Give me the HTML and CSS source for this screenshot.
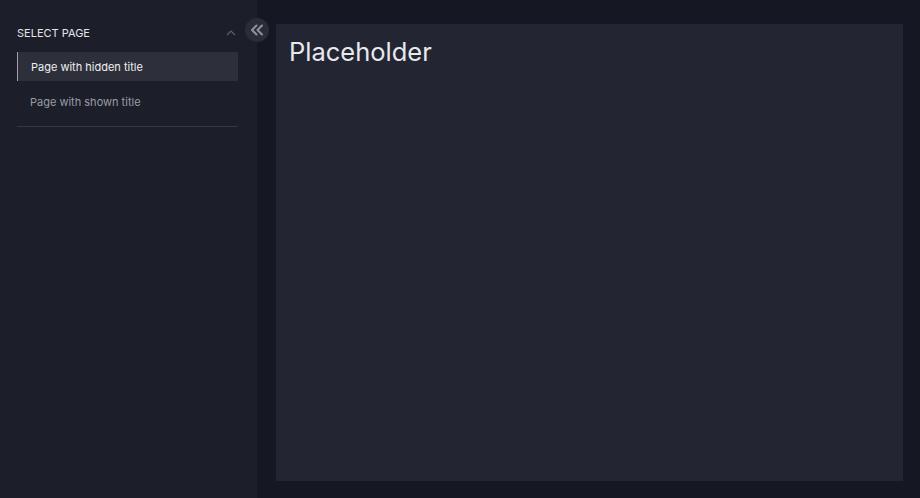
FILE: index.html
```html
<!DOCTYPE html>
<html>
<head>
<meta charset="utf-8">
<link rel="stylesheet" href="styles.css">
</head>
<body>
<div class="app">
  <aside class="sidebar">
    <div class="section-head">
      <span class="section-title">SELECT PAGE</span>
      <svg class="chev-up" width="10" height="6" viewBox="0 0 10 6"><path d="M1 5 L5 1 L9 5" fill="none" stroke="#5d606c" stroke-width="1.2"/></svg>
    </div>
    <nav class="nav">
      <div class="nav-item active">Page with hidden title</div>
      <div class="nav-item">Page with shown title</div>
    </nav>
    <div class="divider"></div>
    <button class="collapse" aria-label="Collapse">
      <svg width="14" height="12" viewBox="0 0 14 12"><path d="M6.5 1.5 L2 6 L6.5 10.5 M12 1.5 L7.5 6 L12 10.5" fill="none" stroke="#8f919c" stroke-width="2" stroke-linecap="round" stroke-linejoin="round"/></svg>
    </button>
  </aside>
  <main class="main">
    <section class="card">
      <h1 class="title">Placeholder</h1>
    </section>
  </main>
</div>
</body>
</html>
```
FILE: styles.css
```css
* { box-sizing: border-box; }
html, body { margin: 0; padding: 0; height: 100%; }
body {
  font-family: Inter, "Noto Sans", "Liberation Sans", sans-serif;
  background: #151722;
  color: #e6e7ea;
}
.app {
  display: flex;
  height: 100vh;
}
.sidebar {
  position: relative;
  width: 257px;
  flex-shrink: 0;
  background: #1c1e2a;
  padding: 24px 19px 0 17px;
}
.section-head {
  display: flex;
  align-items: center;
  justify-content: space-between;
  height: 18px;
  padding-right: 2px;
}
.section-title {
  font-size: 11px;
  color: #e4e5e9;
}
.chev-up { display: block; }
.nav {
  margin-top: 10px;
  display: flex;
  flex-direction: column;
  gap: 6px;
}
.nav-item {
  height: 29px;
  display: flex;
  align-items: center;
  padding-left: 13px;
  font-size: 11px;
  color: #9a9ca6;
}
.nav-item.active {
  background: #2d2f3b;
  color: #eeeff2;
  border-left: 1px solid #9ea0aa;
}
.divider {
  margin-top: 10px;
  height: 1px;
  background: #353744;
}
.collapse {
  position: absolute;
  top: 18px;
  right: -12px;
  width: 24px;
  height: 24px;
  border-radius: 50%;
  border: none;
  background: #2a2c38;
  padding: 0;
  display: flex;
  align-items: center;
  justify-content: center;
  z-index: 2;
}
.main {
  flex: 1;
  padding: 24px 17px 17px 19px;
  display: flex;
}
.card {
  flex: 1;
  background: #232532;
  padding: 13px 13px;
}
.title {
  margin: 0;
  font-size: 25.5px;
  font-weight: 400;
  color: #e8e9ec;
  line-height: 30px;
}
```
